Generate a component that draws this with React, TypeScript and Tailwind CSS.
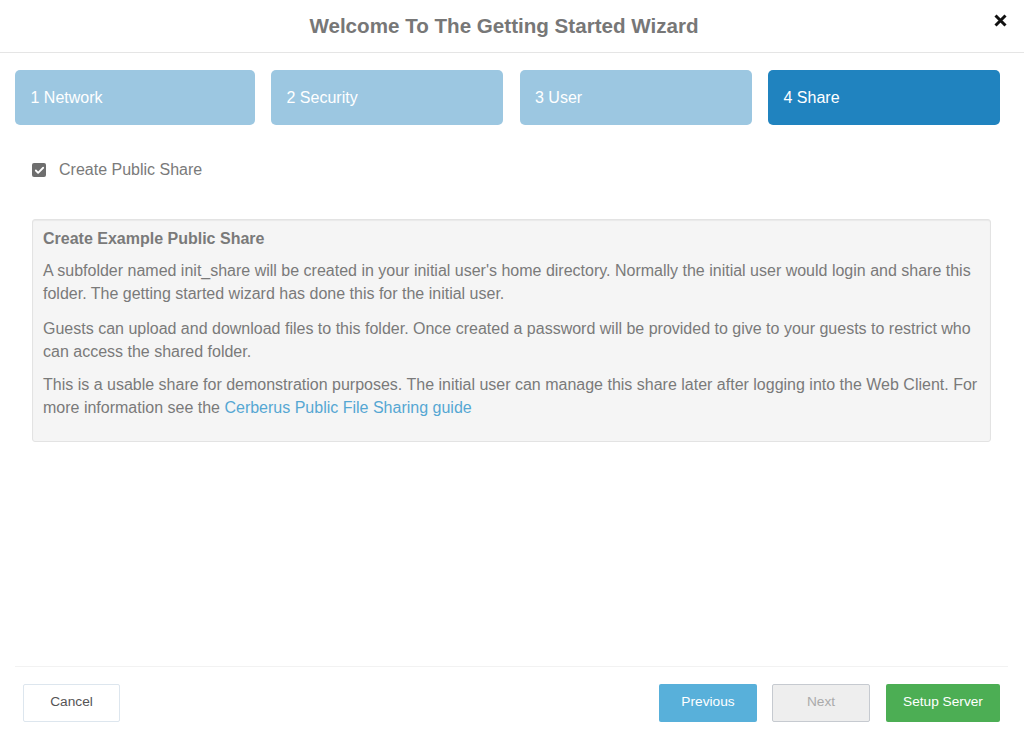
import { Check } from 'lucide-react';

const steps = [
  { label: '1 Network', active: false, width: 'w-[239.5px]' },
  { label: '2 Security', active: false, width: 'w-[232px]' },
  { label: '3 User', active: false, width: 'w-[232px]' },
  { label: '4 Share', active: true, width: 'w-[232px]' },
];

function StepTab({ label, active, width }: { label: string; active: boolean; width: string }) {
  return (
    <div
      className={`flex h-[55px] items-center rounded-[5px] px-[15.5px] text-[16px] text-white ${width} ${
        active ? 'bg-[#2083bf]' : 'bg-[#9cc7e1]'
      }`}
    >
      {label}
    </div>
  );
}

export default function App() {
  return (
    <div className="flex h-[736px] w-[1024px] flex-col overflow-hidden bg-white font-['Liberation_Sans',Arial,sans-serif] text-[16px] text-[#7a7a7a]">
      {/* Header */}
      <div className="relative h-[53px] border-b border-[#e5e5e5]">
        <h4 className="pt-[12px] pr-[16px] text-center text-[20.6px] leading-[27px] font-bold text-[#777777]">
          Welcome To The Getting Started Wizard
        </h4>
        <button className="absolute top-[13px] right-[16px] text-[#111]">
          <svg width="15" height="15" viewBox="0 0 15 15" fill="none" stroke="currentColor" strokeWidth="3">
            <path d="M2.5 2.5 12.5 12.5M12.5 2.5 2.5 12.5" />
          </svg>
        </button>
      </div>

      {/* Steps */}
      <div className="mt-[17px] flex gap-[16.5px] pr-6 pl-[15px]">
        {steps.map((step) => (
          <StepTab key={step.label} label={step.label} active={step.active} width={step.width} />
        ))}
      </div>

      {/* Body */}
      <div className="flex-1 px-8">
        <label className="mt-[36px] flex h-[18px] items-center gap-[13px]">
          <span className="flex h-[14px] w-[14px] items-center justify-center rounded-[2px] bg-[#6e6e6e]">
            <Check size={11} strokeWidth={4} className="text-white" />
          </span>
          <span className="text-[16px]">Create Public Share</span>
        </label>

        <div className="mt-[40px] h-[223px] w-[959px] rounded-[3px] border border-[#e3e3e3] bg-[#f5f5f5] px-[10px] pt-[7px] leading-[23px] shadow-[inset_0_1px_1px_rgba(0,0,0,0.05)]">
          <div className="font-bold">Create Example Public Share</div>
          <p className="mt-[9px]">
            A subfolder named init_share will be created in your initial user's home directory. Normally the initial
            user would login and share this folder. The getting started wizard has done this for the initial user.
          </p>
          <p className="mt-[12px]">
            Guests can upload and download files to this folder. Once created a password will be provided to give to
            your guests to restrict who can access the shared folder.
          </p>
          <p className="mt-[10px]">
            This is a usable share for demonstration purposes. The initial user can manage this share later after
            logging into the Web Client. For more information see the{' '}
            <a className="text-[#55a7d3]">Cerberus Public File Sharing guide</a>
          </p>
        </div>
      </div>

      {/* Footer */}
      <div className="mr-4 ml-[15px] flex h-[70px] border-t border-[#f2f2f2] pt-[17px] pr-2 pl-2 text-[13.7px]">
        <button className="h-[38px] w-[97px] rounded-[2px] border border-[#dde6ee] bg-white pb-[1px] text-[#555]">
          Cancel
        </button>
        <div className="ml-auto flex">
          <button className="h-[38px] w-[98px] rounded-[2px] bg-[#58b0da] pb-[1px] text-white">Previous</button>
          <button className="ml-[15px] h-[38px] w-[98px] rounded-[2px] border border-[#c6cad0] bg-[#eeeeee] pb-[1px] text-[#aaaaaa]">
            Next
          </button>
          <button className="ml-[16px] h-[38px] w-[114px] rounded-[2px] bg-[#4cae54] pb-[1px] text-white">
            Setup Server
          </button>
        </div>
      </div>
    </div>
  );
}
